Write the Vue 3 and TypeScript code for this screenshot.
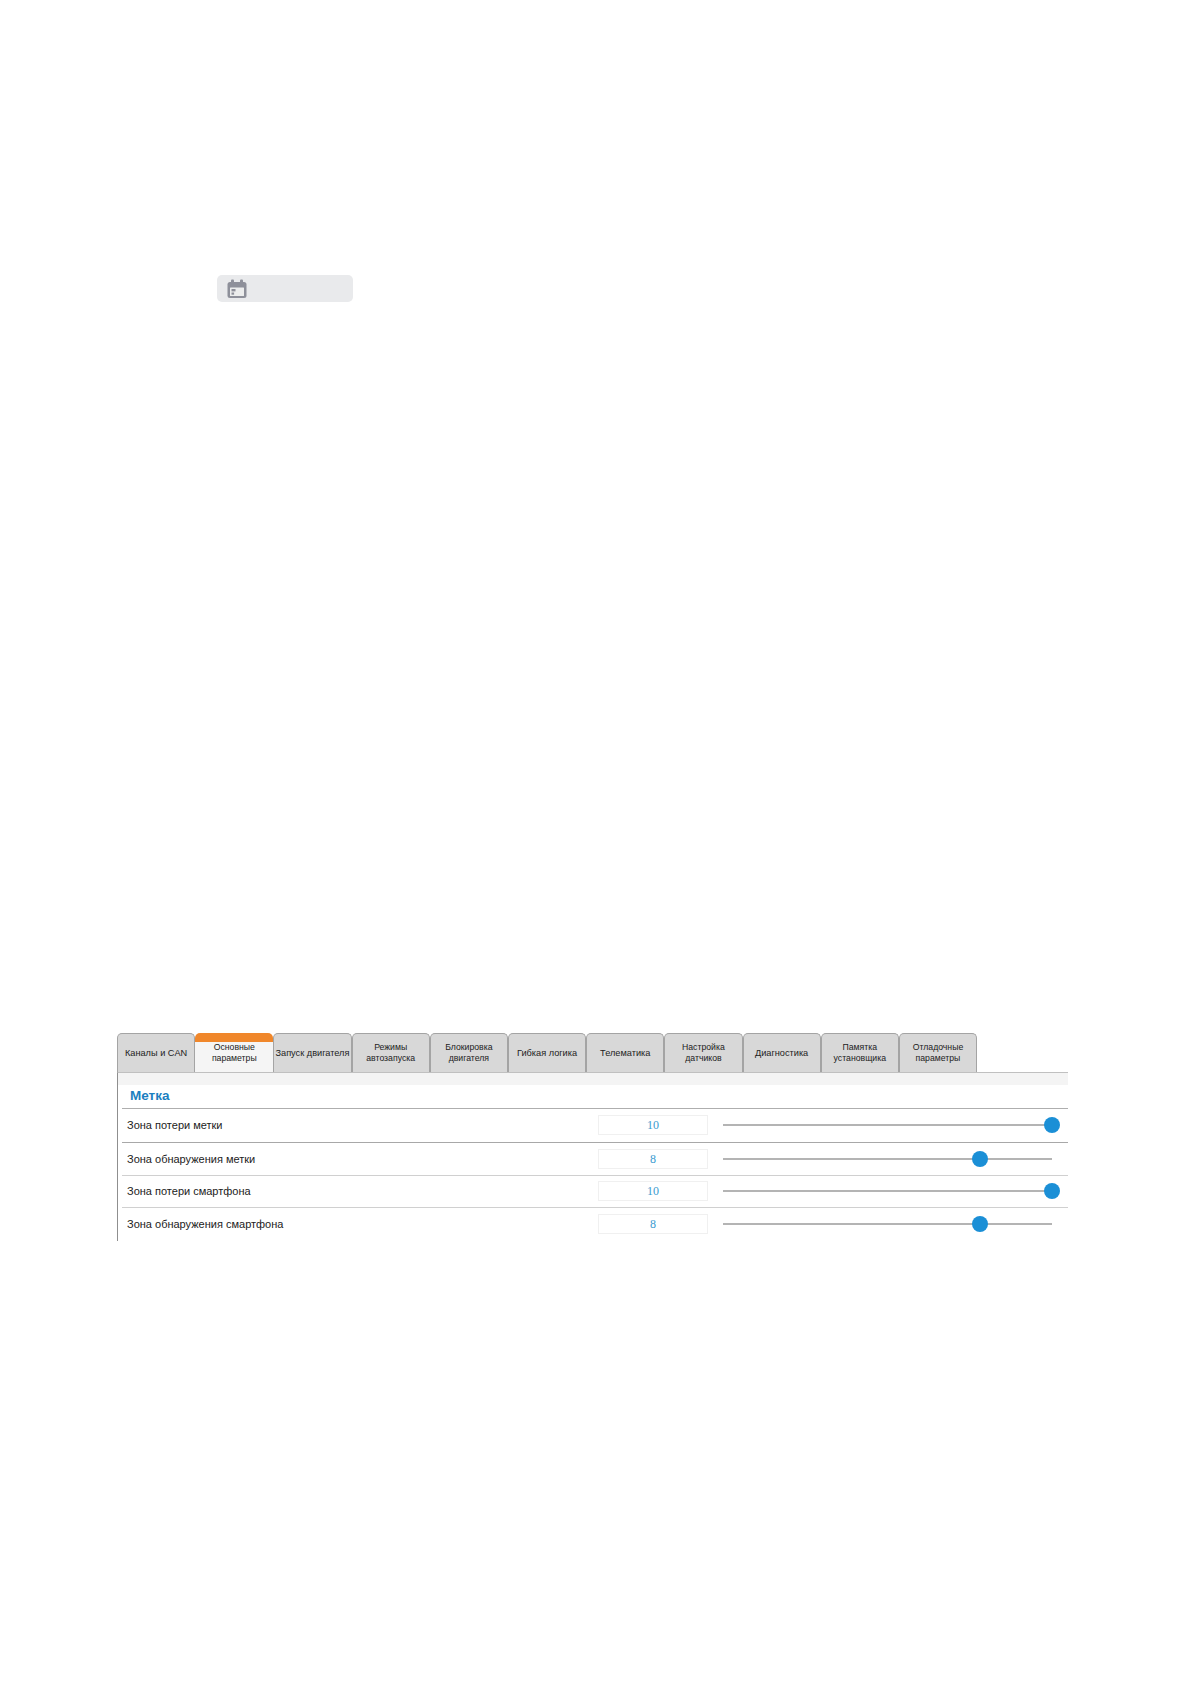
<script setup lang="ts">
interface Tab { label: string[]; active?: boolean }
interface Row { label: string; value: number; max: number; height: number; strong: boolean; stop: number }

const tabs: Tab[] = [
  { label: ['Каналы и CAN'] },
  { label: ['Основные', 'параметры'], active: true },
  { label: ['Запуск двигателя'] },
  { label: ['Режимы', 'автозапуска'] },
  { label: ['Блокировка', 'двигателя'] },
  { label: ['Гибкая логика'] },
  { label: ['Телематика'] },
  { label: ['Настройка', 'датчиков'] },
  { label: ['Диагностика'] },
  { label: ['Памятка', 'установщика'] },
  { label: ['Отладочные', 'параметры'] },
]

const rows: Row[] = [
  { label: 'Зона потери метки', value: 10, max: 10, height: 34, strong: true, stop: 100 },
  { label: 'Зона обнаружения метки', value: 8, max: 10, height: 33, strong: false, stop: 78 },
  { label: 'Зона потери смартфона', value: 10, max: 10, height: 32, strong: false, stop: 100 },
  { label: 'Зона обнаружения смартфона', value: 8, max: 10, height: 33, strong: false, stop: 78 },
]
</script>

<template>
  <div class="page">
    <div class="date-field">
      <svg class="cal" width="20" height="20" viewBox="0 0 20 20">
        <rect x="0.5" y="3" width="19" height="16" rx="2.5" fill="#8e909a" />
        <rect x="4" y="0.5" width="3" height="5" rx="1" fill="#8e909a" />
        <rect x="13" y="0.5" width="3" height="5" rx="1" fill="#8e909a" />
        <rect x="3" y="8.5" width="14" height="8.5" rx="0.5" fill="#eceded" />
        <rect x="4.5" y="10" width="4" height="2.4" fill="#8e909a" />
        <rect x="4.5" y="13.5" width="2.6" height="2.2" fill="#8e909a" />
      </svg>
    </div>

    <section class="settings">
      <nav class="tabs">
        <div v-for="tab in tabs" :key="tab.label.join(' ')" class="tab" :class="{ active: tab.active }">
          <span v-for="line in tab.label" :key="line" class="tab-line" :class="{ second: tab.label.length > 1 }">{{ line }}</span>
        </div>
      </nav>
      <div class="panel">
        <div class="strip"></div>
        <div class="body">
          <h2 class="title">Метка</h2>
          <div
            v-for="row in rows"
            :key="row.label"
            class="row"
            :class="{ strong: row.strong }"
            :style="{ height: row.height + 'px' }"
          >
            <span class="label">{{ row.label }}</span>
            <span class="value">{{ row.value }}</span>
            <div class="slider">
              <div class="track"></div>
              <div class="thumb" :style="{ left: row.stop + '%' }"></div>
            </div>
          </div>
        </div>
      </div>
    </section>
  </div>
</template>

<style scoped>
.page {
  height: 1685px;
  box-sizing: border-box;
  padding-top: 275px;
  background: #fff;
  font-family: "Liberation Sans", Arial, sans-serif;
  overflow: hidden;
}
.date-field {
  display: flex;
  align-items: center;
  box-sizing: border-box;
  width: 136px;
  height: 27px;
  margin-left: 217px;
  padding-left: 10px;
  border-radius: 5px;
  background: #e9eaec;
}
.settings {
  width: 951px;
  margin: 731px 0 0 117px;
}
.tabs {
  display: flex;
  height: 39px;
}
.tab {
  flex: 0 0 78.2px;
  min-width: 0;
  box-sizing: border-box;
  display: flex;
  flex-direction: column;
  align-items: center;
  justify-content: center;
  border: 1px solid #a4a4a4;
  border-bottom: 0;
  border-radius: 5px 5px 0 0;
  background: #d8d8d8;
  color: #222;
  font-size: 9.2px;
  line-height: 11px;
  white-space: nowrap;
  text-align: center;
}
.tab-line.second {
  font-size: 8.7px;
}
.tab.active {
  border: 0;
  border-top: 9px solid #f0872b;
  background: #f5f5f5;
  padding-bottom: 8px;
}
.panel {
  border-left: 1px solid #8f8f8f;
  height: 169px;
  border-top: 1px solid #c0c0c0;
  box-sizing: border-box;
}
.strip {
  height: 12px;
  background: #f4f4f4;
}
.body {
  margin-left: 4px;
}
.title {
  box-sizing: border-box;
  height: 24px;
  margin: 0;
  padding: 2px 0 0 8px;
  border-bottom: 1px solid #aeaeae;
  color: #1c7fc0;
  font-size: 13.5px;
  line-height: 17px;
  font-weight: 700;
}
.row {
  box-sizing: border-box;
  display: flex;
  align-items: center;
  padding-bottom: 1px;
  border-bottom: 1px solid #d0d0d0;
}
.row.strong {
  border-bottom-color: #a8a8a8;
}
.row:last-child {
  border-bottom: 0;
}
.label {
  width: 476px;
  padding-left: 5px;
  box-sizing: border-box;
  color: #222;
  font-size: 11px;
}
.value {
  box-sizing: border-box;
  width: 110px;
  height: 20px;
  border: 1px solid #f0f0f0;
  color: #3a9bd0;
  font-family: "Liberation Serif", serif;
  font-size: 12px;
  line-height: 18px;
  text-align: center;
}
.slider {
  position: relative;
  width: 329px;
  height: 16px;
  margin-left: 15px;
}
.track {
  position: absolute;
  top: 7px;
  left: 0;
  right: 0;
  height: 2px;
  background: #b4b4b4;
}
.thumb {
  position: absolute;
  top: 0;
  width: 16px;
  height: 16px;
  margin-left: -8px;
  border-radius: 50%;
  background: #1b8fd6;
}
</style>

<style>
html, body { margin: 0; background: #fff; }
</style>
